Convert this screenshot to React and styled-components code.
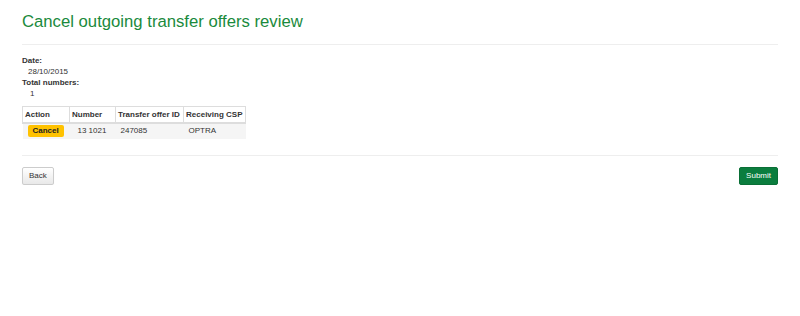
import React from "react";
import styled, { createGlobalStyle } from "styled-components";

const GlobalStyle = createGlobalStyle`
  body {
    margin: 0;
    background: #fff;
    font-family: "Liberation Sans", Arial, sans-serif;
    color: #333;
  }
`;

const Page = styled.div`
  padding: 0 22px;
`;

const Title = styled.h1`
  margin: 0;
  padding-top: 11px;
  font-size: 16.7px;
  font-weight: normal;
  color: #1a8a3c;
  line-height: 22px;
`;

const Rule = styled.hr`
  border: none;
  border-top: 1px solid #eee;
  margin: ${(p) => p.$margin};
`;

const Details = styled.dl`
  margin: 0;
  font-size: 8px;
  line-height: 11px;
`;

const Term = styled.dt`
  font-weight: bold;
`;

const Value = styled.dd`
  margin: 0 0 0 ${(p) => p.$indent || "6px"};
`;

const Table = styled.table`
  border-collapse: collapse;
  margin-top: 7px;
  font-size: 8px;
`;

const HeadCell = styled.th`
  text-align: left;
  font-weight: bold;
  padding: 2px 2px;
  height: 16px;
  box-sizing: border-box;
  border: 1px solid #ddd;
  border-bottom: 2px solid #ddd;
  width: ${(p) => p.$w};
`;

const Row = styled.tr`
  background: #f5f5f5;
`;

const Cell = styled.td`
  padding: 1px 5px;
  height: 16px;
  box-sizing: border-box;
  padding-left: ${(p) => p.$pl || "5px"};
  line-height: 10px;
`;

const Badge = styled.span`
  display: inline-block;
  background: #ffc200;
  color: #222;
  font-weight: bold;
  padding: 1px 5px;
  border-radius: 2px;
  line-height: 10px;
  vertical-align: middle;
`;

const Actions = styled.div`
  display: flex;
  justify-content: space-between;
  align-items: center;
`;

const Button = styled.button`
  font-family: inherit;
  font-size: 8px;
  height: 18px;
  padding: 0 6px;
  border-radius: 2px;
  cursor: pointer;
  border: 1px solid ${(p) => (p.$primary ? "#0a6f36" : "#ccc")};
  background: ${(p) =>
    p.$primary ? "#0b7d3e" : "linear-gradient(#fff, #e8e8e8)"};
  color: ${(p) => (p.$primary ? "#fff" : "#333")};
  box-shadow: ${(p) => (p.$primary ? "none" : "0 1px 1px rgba(0,0,0,0.05)")};
`;

export default function App() {
  return (
    <>
      <GlobalStyle />
      <Page>
        <Title>Cancel outgoing transfer offers review</Title>
        <Rule $margin="11px 0 10px" />
        <Details>
          <Term>Date:</Term>
          <Value>28/10/2015</Value>
          <Term>Total numbers:</Term>
          <Value $indent="8px">1</Value>
        </Details>
        <Table>
          <thead>
            <tr>
              <HeadCell $w="47px">Action</HeadCell>
              <HeadCell $w="46px">Number</HeadCell>
              <HeadCell $w="68px">Transfer offer ID</HeadCell>
              <HeadCell $w="62px">Receiving CSP</HeadCell>
            </tr>
          </thead>
          <tbody>
            <Row>
              <Cell>
                <Badge>Cancel</Badge>
              </Cell>
              <Cell $pl="8px">13 1021</Cell>
              <Cell>247085</Cell>
              <Cell>OPTRA</Cell>
            </Row>
          </tbody>
        </Table>
        <Rule $margin="16px 0 11px" />
        <Actions>
          <Button>Back</Button>
          <Button $primary>Submit</Button>
        </Actions>
      </Page>
    </>
  );
}
